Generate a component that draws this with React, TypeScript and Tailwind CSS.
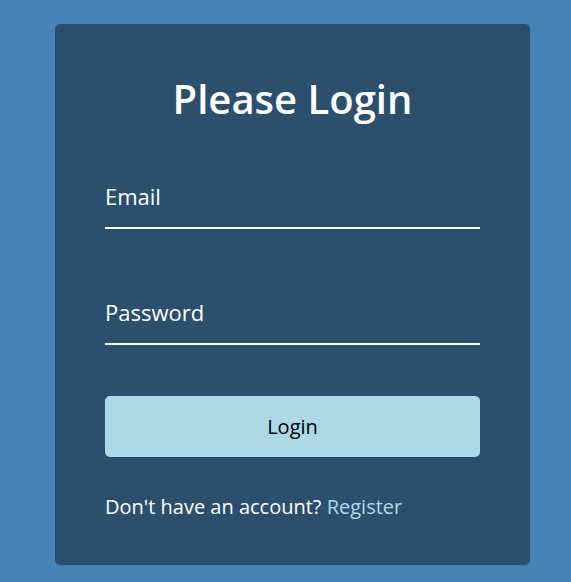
export default function App() {
  return (
    <div className="min-h-screen w-full bg-[#4682b4] pt-[24px] font-['Open_Sans',sans-serif]">
      <div className="ml-[55px] w-[475px] rounded-[5px] bg-[#2c4f6d] px-[50px] pt-[51px] pb-[46px]">
        <h1 className="text-center text-[40px] leading-[48px] font-semibold text-white">Please Login</h1>

        <form className="mt-[61px] flex flex-col" onSubmit={(e) => e.preventDefault()}>
          <input
            type="email"
            placeholder="Email"
            className="w-full border-b-2 border-white bg-transparent pb-[19px] text-[22px] leading-[24px] text-white outline-none placeholder:text-white"
          />
          <input
            type="password"
            placeholder="Password"
            className="mt-[71px] w-full border-b-2 border-white bg-transparent pb-[19px] text-[22px] leading-[24px] text-white outline-none placeholder:text-white"
          />
          <button
            type="submit"
            className="mt-[51px] h-[61px] w-full rounded-[5px] bg-[#add8e6] text-[20px] text-black"
          >
            Login
          </button>
        </form>

        <p className="mt-[38px] text-[20px] leading-[24px] text-white">
          Don't have an account? <a href="#" className="text-[#add8e6]">Register</a>
        </p>
      </div>
    </div>
  );
}
